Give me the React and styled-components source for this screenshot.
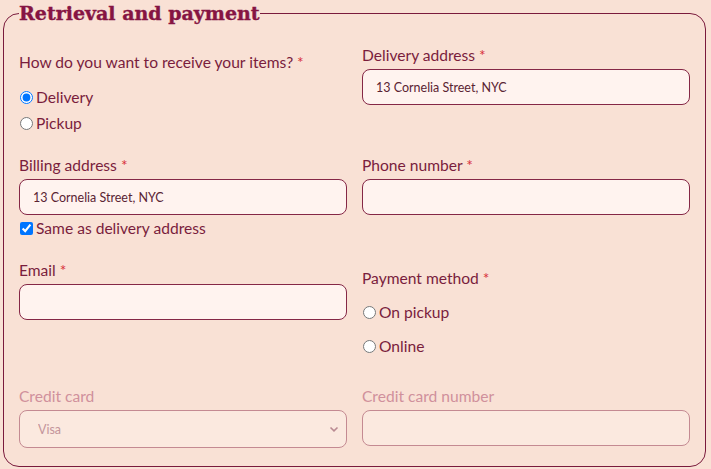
import React from 'react';
import styled, { createGlobalStyle } from 'styled-components';

const GlobalStyle = createGlobalStyle`
    html, body {
        margin: 0;
        background: #f9e1d5;
    }
    body {
        font-family: Lato, "Open Sans", sans-serif;
        color: #7a1d3d;
    }
`;

const Fieldset = styled.fieldset`
    margin: 0 5px 3px 3px;
    padding: 19px 15px 18px 15px;
    border: 1px solid #7a1a3c;
    border-radius: 16px;
    min-width: 0;
`;

const Legend = styled.legend`
    padding: 0;
    font-family: "DejaVu Serif", "Liberation Serif", serif;
    font-weight: 700;
    font-size: 19px;
    line-height: 26px;
    color: #861443;
    -webkit-text-stroke: 0.4px #861443;
`;

const Grid = styled.div`
    display: grid;
    grid-template-columns: 1fr 1fr;
    column-gap: 15px;
    row-gap: 22px;
    align-items: start;
`;

const Field = styled.div`
    display: flex;
    flex-direction: column;
    margin-top: ${(p) => p.$offset || 0}px;
`;

const Label = styled.label`
    font-size: 15.6px;
    line-height: 20px;
    margin-bottom: 4px;
    color: ${(p) => (p.$disabled ? '#d0909c' : '#7a1d3d')};
`;

const Req = styled.span`
    color: #d8323c;
`;

const TextInput = styled.input`
    box-sizing: border-box;
    height: 36px;
    width: 100%;
    margin: 0;
    padding: 0 13px;
    border: 1px solid ${(p) => (p.disabled ? '#c48a92' : '#852746')};
    border-radius: 8px;
    background: ${(p) => (p.disabled ? '#fbe9df' : '#fff3ef')};
    font-family: Lato, sans-serif;
    font-size: 12.5px;
    color: #5a2333;
    outline: none;
`;

const SelectWrap = styled.div`
    position: relative;
`;

const Select = styled.select`
    box-sizing: border-box;
    appearance: none;
    width: 100%;
    height: 38px;
    margin: 0;
    padding: 0 18px;
    border: 1px solid #c48a92;
    border-radius: 8px;
    background: #fbe9df;
    font-family: Lato, sans-serif;
    font-size: 12.5px;
    color: #c4959b;
    opacity: 1;
`;

const Chevron = styled.svg`
    position: absolute;
    right: 8px;
    top: 15px;
    pointer-events: none;
`;

const Options = styled.div`
    display: flex;
    flex-direction: column;
    gap: ${(p) => p.$gap}px;
    margin-top: ${(p) => p.$top}px;
`;

const Option = styled.label`
    display: flex;
    align-items: center;
    font-size: 15.6px;
    line-height: 20px;
    color: #7a1d3d;

    input {
        margin: 0 3px 0 1px;
        width: 13px;
        height: 13px;
    }
`;

const Radio = ({ name, label, checked }) => (
    <Option>
        <input type="radio" name={name} defaultChecked={checked} />
        {label}
    </Option>
);

const App = () => {
    return (
        <>
            <GlobalStyle />
            <Fieldset>
                <Legend>Retrieval and payment</Legend>
                <Grid>
                    <Field $offset={7}>
                        <Label>How do you want to receive your items? <Req>*</Req></Label>
                        <Options $gap={6} $top={11}>
                            <Radio name="receive" label="Delivery" checked />
                            <Radio name="receive" label="Pickup" />
                        </Options>
                    </Field>
                    <Field>
                        <Label>Delivery address <Req>*</Req></Label>
                        <TextInput defaultValue="13 Cornelia Street, NYC" />
                    </Field>

                    <Field>
                        <Label>Billing address <Req>*</Req></Label>
                        <TextInput defaultValue="13 Cornelia Street, NYC" />
                        <Options $gap={0} $top={3}>
                            <Option>
                                <input type="checkbox" defaultChecked />
                                Same as delivery address
                            </Option>
                        </Options>
                    </Field>
                    <Field>
                        <Label>Phone number <Req>*</Req></Label>
                        <TextInput />
                    </Field>

                    <Field>
                        <Label>Email <Req>*</Req></Label>
                        <TextInput />
                    </Field>
                    <Field $offset={8}>
                        <Label>Payment method <Req>*</Req></Label>
                        <Options $gap={14} $top={10}>
                            <Radio name="pay" label="On pickup" />
                            <Radio name="pay" label="Online" />
                        </Options>
                    </Field>

                    <Field $offset={8}>
                        <Label $disabled>Credit card</Label>
                        <SelectWrap>
                            <Select disabled defaultValue="visa">
                                <option value="visa">Visa</option>
                                <option value="mc">Mastercard</option>
                            </Select>
                            <Chevron width="10" height="8" viewBox="0 0 10 8">
                                <path d="M1.5 2.5 L5 5.8 L8.5 2.5" fill="none" stroke="#b98a92" strokeWidth="1.6" />
                            </Chevron>
                        </SelectWrap>
                    </Field>
                    <Field $offset={8}>
                        <Label $disabled>Credit card number</Label>
                        <TextInput disabled />
                    </Field>
                </Grid>
            </Fieldset>
        </>
    );
};

export default App;
